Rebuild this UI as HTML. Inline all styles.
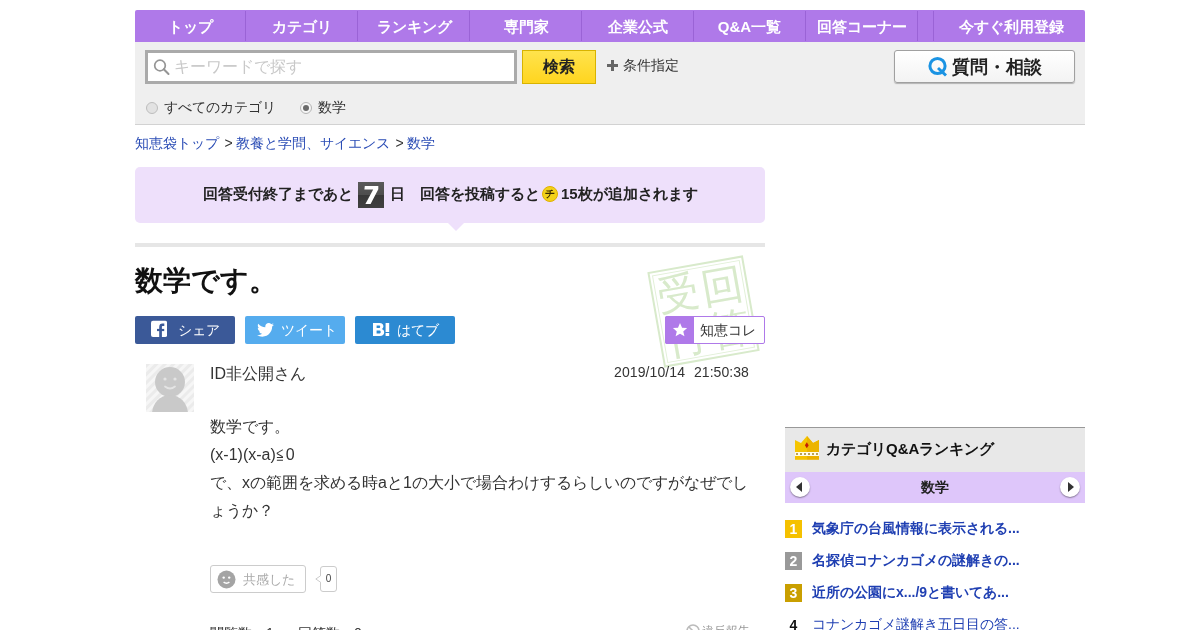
<!DOCTYPE html>
<html lang="ja"><head><meta charset="utf-8">
<style>
*{box-sizing:border-box;margin:0;padding:0}
html,body{width:1200px;height:630px;overflow:hidden;background:#fff}body{will-change:transform}
body{font-family:"Liberation Sans",sans-serif;color:#333;position:relative}
.a{position:absolute;white-space:nowrap}
#nav{left:135px;top:10px;width:950px;height:32px;background:#af79e9;border-radius:2px 2px 0 0}
#nav div{position:absolute;top:0;height:32px;line-height:34px;color:#fff;font-weight:bold;font-size:15px;text-align:center}
#nav .sep{width:1px;top:1px;height:30px;background:#9a63d6}
#gray{left:135px;top:42px;width:950px;height:83px;background:#efefef;border-bottom:1px solid #d2d2d2}
#sbox{left:145px;top:50px;width:372px;height:34px;border:3px solid #aaa;background:#fff}
#sbtn{left:522px;top:50px;width:74px;height:34px;border:1px solid #d8b300;background:linear-gradient(#ffe34d,#ffd51f);font-weight:bold;font-size:16px;line-height:32px;text-align:center;color:#222}
#qbtn{left:894px;top:50px;width:181px;height:33px;border:1px solid #a0a0a0;border-radius:3px;background:linear-gradient(#fff,#f3f3f3);box-shadow:0 1px 1px rgba(0,0,0,.25)}
.radio{width:12px;height:12px;border-radius:50%;border:1px solid #bdbdbd;background:#e2e2e2}
.bc{font-size:14px;color:#2a4cb5}
#notice{left:135px;top:167px;width:630px;height:56px;background:#eee0fb;border-radius:5px}
#tri{left:448px;top:223px;width:0;height:0;border-left:8px solid transparent;border-right:8px solid transparent;border-top:8px solid #eee0fb}
#gline{left:135px;top:243px;width:630px;height:4px;background:#e6e6e6}
.share{top:316px;width:100px;height:28px;border-radius:2px;color:#fff;font-size:14px;line-height:28px}
.side-item{font-size:14px;font-weight:bold;color:#1f3fb2}
.rk{width:17px;height:18px;color:#fff;font-weight:bold;font-size:14px;text-align:center;line-height:19px}
</style></head><body>

<div id="nav" class="a">
  <div style="left:0;width:110px">トップ</div>
  <div class="sep" style="left:110px"></div>
  <div style="left:111px;width:111px">カテゴリ</div>
  <div class="sep" style="left:222px"></div>
  <div style="left:224px;width:111px">ランキング</div>
  <div class="sep" style="left:334px"></div>
  <div style="left:336px;width:111px">専門家</div>
  <div class="sep" style="left:446px"></div>
  <div style="left:447px;width:111px">企業公式</div>
  <div class="sep" style="left:558px"></div>
  <div style="left:559px;width:111px">Q&amp;A一覧</div>
  <div class="sep" style="left:670px"></div>
  <div style="left:671px;width:111px">回答コーナー</div>
  <div class="sep" style="left:782px"></div>
  <div class="sep" style="left:798px"></div>
  <div style="left:801px;width:151px">今すぐ利用登録</div>
</div>

<div id="gray" class="a"></div>
<div id="sbox" class="a"></div>
<svg class="a" style="left:153px;top:57px" width="18" height="20" viewBox="0 0 18 20"><circle cx="7" cy="8.5" r="5.3" fill="none" stroke="#959595" stroke-width="1.7"/><path d="M10.8 12.3 L15.5 17" stroke="#959595" stroke-width="2" stroke-linecap="round"/></svg>
<div class="a" style="left:174px;top:57px;font-size:16px;line-height:20px;color:#c8c8c8">キーワードで探す</div>
<div id="sbtn" class="a">検索</div>
<div class="a" style="left:607px;top:60px;width:11px;height:11px"><div style="position:absolute;left:0;top:4px;width:11px;height:3px;background:#666"></div><div style="position:absolute;left:4px;top:0;width:3px;height:11px;background:#666"></div></div>
<div class="a" style="left:623px;top:56px;font-size:14px;line-height:18px;color:#333">条件指定</div>
<div id="qbtn" class="a"></div>
<svg class="a" style="left:927px;top:55px" width="22" height="22" viewBox="0 0 22 22"><circle cx="10.5" cy="11" r="7.6" fill="none" stroke="#1a93e3" stroke-width="3"/><path d="M11 13 L19 20.5" stroke="#1a93e3" stroke-width="3"/></svg>
<div class="a" style="left:952px;top:56px;font-size:18px;line-height:22px;font-weight:bold;color:#222">質問・相談</div>

<div class="a radio" style="left:146px;top:102px"></div>
<div class="a" style="left:164px;top:98px;font-size:14px;line-height:18px;color:#333">すべてのカテゴリ</div>
<div class="a radio" style="left:300px;top:102px;background:#f6f6f6;border-color:#b5b5b5"><div style="position:absolute;left:2px;top:2px;width:6px;height:6px;border-radius:50%;background:#6a6a6a"></div></div>
<div class="a" style="left:318px;top:98px;font-size:14px;line-height:18px;color:#333">数学</div>

<div class="a" style="left:135px;top:134px;font-size:14px;line-height:18px"><span class="bc">知恵袋トップ</span><span style="margin:0 -0.8px 0 1.7px"> &gt; </span><span class="bc">教養と学問、サイエンス</span><span style="margin:0 -0.8px 0 1.7px"> &gt; </span><span class="bc">数学</span></div>

<div id="notice" class="a"></div>
<div id="tri" class="a"></div>
<div class="a" style="left:203px;top:184px;font-size:15px;line-height:20px;font-weight:bold;color:#222">回答受付終了まであと</div>
<div class="a" style="left:358px;top:182px;width:26px;height:26px;background:linear-gradient(#5a5a5a 0%,#4e4e4e 49%,#383838 50%,#404040 100%);"><svg style="position:absolute;left:0;top:0" width="26" height="26" viewBox="0 0 26 26"><path d="M6.8 4 H20.3 V7.3 L12.6 22 H7.4 L15.2 7.4 H6.4 Z" fill="#fff"/></svg></div>
<div class="a" style="left:390px;top:184px;font-size:15px;line-height:20px;font-weight:bold;color:#222">日　回答を投稿すると</div>
<div class="a" style="left:542px;top:186px;width:16px;height:16px;border-radius:50%;background:#f3d21a;border:1px solid #e0b000;font-size:10px;line-height:14px;text-align:center;color:#3a2a00;font-weight:bold">チ</div>
<div class="a" style="left:561px;top:184px;font-size:15px;line-height:20px;font-weight:bold;color:#222">15枚が追加されます</div>
<div id="gline" class="a"></div>

<div class="a" style="left:135px;top:264px;font-size:28px;line-height:34px;font-weight:bold;color:#111">数学です。</div>

<!-- stamp -->
<div class="a" style="left:655px;top:263px;width:97px;height:97px;transform:rotate(-10deg);border:2px solid #d8eacb;color:#d8eacb">
  <div style="position:absolute;inset:2px;border:1px solid #e2f0d8"></div>
  <div style="position:absolute;left:4px;top:3px;font-size:42px;line-height:44px">受</div>
  <div style="position:absolute;left:48px;top:3px;font-size:42px;line-height:44px">回</div>
  <div style="position:absolute;left:4px;top:47px;font-size:42px;line-height:44px">付</div>
  <div style="position:absolute;left:48px;top:47px;font-size:42px;line-height:44px">答</div>
</div>

<div class="a share" style="left:135px;background:#3b5998">
  <svg style="position:absolute;left:16px;top:4px" width="16" height="17" viewBox="0 0 16 17"><rect x="0" y="0.7" width="16.2" height="16.3" rx="2" fill="#fff"/><path d="M8.2 17 V7.2 C8.2 4.7 9.4 3.6 11.4 3.6 H13.3 V5.9 H11.9 C11.2 5.9 10.9 6.2 10.9 6.9 V17 Z" fill="#3b5998"/><rect x="6" y="8.9" width="7.2" height="2.2" fill="#3b5998"/></svg>
  <span style="position:absolute;left:43px;top:0">シェア</span>
</div>
<div class="a share" style="left:245px;background:#55acee">
  <svg style="position:absolute;left:12px;top:7px" width="17" height="14" viewBox="0 0 24 20"><path d="M24 2.4c-.9.4-1.8.6-2.8.8 1-.6 1.8-1.6 2.2-2.7-1 .6-2 1-3.1 1.2C19.3.6 18 0 16.6 0c-2.7 0-4.9 2.2-4.9 4.9 0 .4 0 .8.1 1.1C7.7 5.8 4.1 3.9 1.7.9c-.4.7-.7 1.6-.7 2.5 0 1.7.9 3.2 2.2 4.1-.8 0-1.6-.2-2.2-.6v.1c0 2.4 1.7 4.4 3.9 4.8-.4.1-.8.2-1.3.2-.3 0-.6 0-.9-.1.6 2 2.4 3.4 4.6 3.4-1.7 1.3-3.8 2.1-6.1 2.1-.4 0-.8 0-1.2-.1 2.2 1.4 4.8 2.2 7.5 2.2 9.1 0 14-7.5 14-14v-.6c1-.7 1.8-1.6 2.5-2.5z" fill="#fff"/></svg>
  <span style="position:absolute;left:36px;top:0">ツイート</span>
</div>
<div class="a share" style="left:355px;background:#2c8ad2">
  <svg style="position:absolute;left:18px;top:7px" width="17" height="13" viewBox="0 0 17 13"><path fill-rule="evenodd" fill="#fff" d="M0 0 H6.6 C9.2 0 10.4 1.3 10.4 3.2 C10.4 4.6 9.6 5.6 8.6 6 C10.1 6.3 11.2 7.5 11.2 9.2 C11.2 11.5 9.6 13 6.9 13 H0 Z M3.6 2.5 V5.1 H5.9 C6.8 5.1 7.2 4.6 7.2 3.8 C7.2 3 6.8 2.5 5.9 2.5 Z M3.6 7.6 V10.5 H6.1 C7.1 10.5 7.7 10 7.7 9 C7.7 8.1 7.1 7.6 6.1 7.6 Z"/><rect x="12.6" y="0" width="3.6" height="9" fill="#fff"/><rect x="12.6" y="10" width="3.6" height="3" fill="#fff"/></svg>
  <span style="position:absolute;left:42px;top:0">はてブ</span>
</div>

<div class="a" style="left:665px;top:316px;width:100px;height:28px;border:1px solid #af79e9;background:#fff;border-radius:2px">
  <div style="position:absolute;left:-1px;top:-1px;width:29px;height:28px;background:#af79e9;border-radius:2px 0 0 2px"></div>
  <svg style="position:absolute;left:6px;top:5px" width="16" height="16" viewBox="0 0 24 24"><path d="M12 1.5l3.1 7 7.6.6-5.8 5 1.8 7.4L12 17.6l-6.6 3.9 1.8-7.4-5.8-5 7.6-.6z" fill="#fff"/></svg>
  <span style="position:absolute;left:34px;top:4px;font-size:14px;line-height:18px;color:#333">知恵コレ</span>
</div>

<!-- avatar -->
<svg class="a" style="left:146px;top:364px" width="48" height="48" viewBox="0 0 48 48">
  <defs><pattern id="st" width="6" height="6" patternUnits="userSpaceOnUse" patternTransform="rotate(45)"><rect width="6" height="6" fill="#f6f6f6"/><rect width="3" height="6" fill="#ebebeb"/></pattern></defs>
  <rect width="48" height="48" fill="url(#st)"/>
  <circle cx="24" cy="18" r="15" fill="#c9c9c9"/>
  <ellipse cx="24" cy="50" rx="18" ry="19" fill="#c9c9c9"/>
  <circle cx="19" cy="15" r="1.6" fill="#e4e4e4"/><circle cx="29" cy="15" r="1.6" fill="#e4e4e4"/>
  <path d="M19 22.5 Q24 26.5 29 22.5" stroke="#e4e4e4" stroke-width="1.8" fill="none" stroke-linecap="round"/>
</svg>
<div class="a" style="left:210px;top:364px;font-size:16px;line-height:20px;color:#333">ID非公開さん</div>
<div class="a" style="left:614px;top:363px;font-size:14px;line-height:18px;color:#333;letter-spacing:0.1px">2019/10/14</div><div class="a" style="left:694px;top:363px;font-size:14px;line-height:18px;color:#333;letter-spacing:0.05px">21:50:38</div>

<div class="a" style="left:210px;top:413px;font-size:16px;line-height:28px;color:#333">数学です。<br>(x-1)(x-a)≦0<br>で、xの範囲を求める時aと1の大小で場合わけするらしいのですがなぜでし<br>ょうか？</div>

<div class="a" style="left:210px;top:565px;width:96px;height:28px;border:1px solid #ccc;border-radius:3px;background:#fff">
  <svg style="position:absolute;left:5.5px;top:3.5px" width="19" height="19" viewBox="0 0 19 19"><circle cx="9.5" cy="9.5" r="9" fill="#a4a4a4"/><circle cx="6.7" cy="7.6" r="1.2" fill="#fff"/><circle cx="12.2" cy="7.6" r="1.2" fill="#fff"/><path d="M6.6 12.2 Q9.5 14.2 12.4 12.2" stroke="#fff" stroke-width="1.5" fill="none"/></svg>
  <span style="position:absolute;left:32px;top:4px;font-size:13px;line-height:19px;color:#aaa">共感した</span>
</div>
<div class="a" style="left:320px;top:566px;width:17px;height:26px;border:1px solid #ccc;border-radius:3px;background:#fff;font-size:10px;line-height:24px;text-align:center;color:#444">0</div>
<svg class="a" style="left:315px;top:575px" width="7" height="8" viewBox="0 0 7 8"><path d="M6 0.5 L0.8 4 L6 7.5" fill="#fff" stroke="#ccc" stroke-width="1"/><rect x="5.5" y="1" width="2" height="6" fill="#fff"/></svg>

<div class="a" style="left:210px;top:624px;font-size:14px;line-height:18px;color:#333">閲覧数：1</div><div class="a" style="left:298px;top:624px;font-size:14px;line-height:18px;color:#333">回答数：0</div>
<svg class="a" style="left:686px;top:624px" width="14" height="14" viewBox="0 0 14 14"><circle cx="7" cy="7" r="6" fill="none" stroke="#bbb" stroke-width="1.6"/><path d="M3 3 L11 11" stroke="#bbb" stroke-width="1.6"/></svg>
<div class="a" style="left:702px;top:622px;font-size:12px;line-height:18px;color:#999">違反報告</div>

<!-- sidebar -->
<div class="a" style="left:785px;top:427px;width:300px;height:45px;background:#e8e8e8;border-top:1px solid #999"></div>
<svg class="a" style="left:795px;top:436px" width="24" height="24" viewBox="0 0 24 24">
  <path d="M0 4 L6 7 L12 0 L18 7 L24 4 L24 16 L0 16 Z" fill="#f6c500"/>
  <path d="M12 0 L18 7 L24 4 L24 16 L12 16 Z" fill="#ecb400"/>
  <rect x="0" y="20" width="12" height="3.8" fill="#f6c200"/><rect x="12" y="20" width="12" height="3.8" fill="#ecb000"/>
  <rect x="0" y="16" width="24" height="4" fill="#fffbea"/>
  <g fill="#b9a15a"><rect x="1" y="17" width="2" height="2"/><rect x="5" y="17" width="2" height="2"/><rect x="9" y="17" width="2" height="2"/><rect x="13" y="17" width="2" height="2"/><rect x="17" y="17" width="2" height="2"/><rect x="21" y="17" width="2" height="2"/></g>
  <path d="M11.8 6.2 L13.7 9.2 L11.8 12.2 L9.9 9.2 Z" fill="#c41e05"/>
</svg>
<div class="a" style="left:826px;top:439px;font-size:15px;line-height:20px;font-weight:bold;color:#111">カテゴリQ&amp;Aランキング</div>
<div class="a" style="left:785px;top:472px;width:300px;height:31px;background:#dec6fa"></div>
<div class="a" style="left:790px;top:477px;width:20px;height:20px;border-radius:50%;background:#fff;box-shadow:0 1px 1.5px rgba(0,0,0,.4)"><div style="position:absolute;left:6px;top:5px;width:0;height:0;border-top:5px solid transparent;border-bottom:5px solid transparent;border-right:6px solid #333"></div></div>
<div class="a" style="left:1060px;top:477px;width:20px;height:20px;border-radius:50%;background:#fff;box-shadow:0 1px 1.5px rgba(0,0,0,.4)"><div style="position:absolute;left:8px;top:5px;width:0;height:0;border-top:5px solid transparent;border-bottom:5px solid transparent;border-left:6px solid #333"></div></div>
<div class="a" style="left:921px;top:478px;font-size:14px;line-height:18px;font-weight:bold;color:#222">数学</div>

<div class="a rk" style="left:785px;top:520px;background:#f5c100">1</div>
<div class="a side-item" style="left:812px;top:519px;line-height:18px">気象庁の台風情報に表示される...</div>
<div class="a rk" style="left:785px;top:552px;background:#999">2</div>
<div class="a side-item" style="left:812px;top:551px;line-height:18px">名探偵コナンカゴメの謎解きの...</div>
<div class="a rk" style="left:785px;top:584px;background:#c99f00">3</div>
<div class="a side-item" style="left:812px;top:583px;line-height:18px">近所の公園にx.../9と書いてあ...</div>
<div class="a" style="left:785px;top:616px;width:17px;text-align:center;font-weight:bold;font-size:14px;line-height:18px;color:#111">4</div>
<div class="a" style="left:812px;top:615px;font-size:14px;line-height:18px;color:#1f3fb2">コナンカゴメ謎解き五日目の答...</div>

</body></html>
